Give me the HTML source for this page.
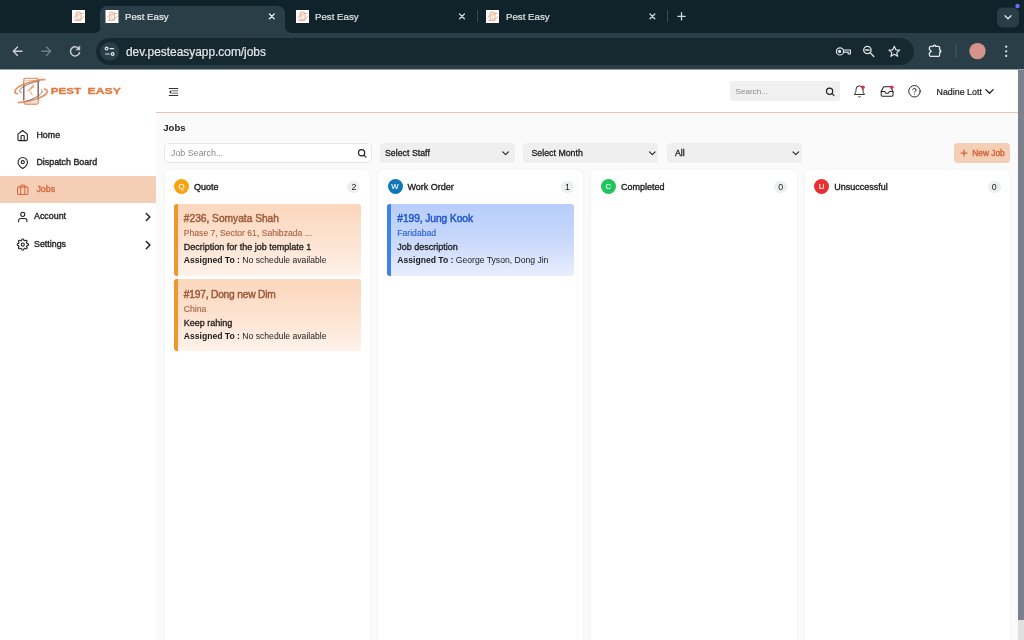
<!DOCTYPE html>
<html lang="en">
<head>
<meta charset="utf-8">
<title>Pest Easy</title>
<style>
*{box-sizing:border-box;margin:0;padding:0}
html,body{width:1024px;height:640px;overflow:hidden;background:#fafafa;font-family:"Liberation Sans",sans-serif;color:#1f1f1f}
.abs{position:absolute}
#tabstrip{position:absolute;left:0;top:0;width:1024px;height:33px;background:#10222a}
#toolbar{position:absolute;left:0;top:32.5px;width:1024px;height:37.5px;background:#2a3e47}
#topline{position:absolute;left:0;top:69px;width:1024px;height:1px;background:#9aa5ab}
.tt{position:absolute;top:9.500px;font-size:9.700px;line-height:14px;color:#dbe2e5;white-space:nowrap;-webkit-text-stroke:.2px currentColor}
#activetab{position:absolute;left:100px;top:5.5px;width:185px;height:28px;background:#2a3e47;border-radius:7px 7px 0 0}
#urlbar{position:absolute;left:96px;top:37.5px;width:818px;height:27.5px;border-radius:14px;background:#162830}
#urltxt{position:absolute;left:126px;top:37.500px;line-height:28px;font-size:11.900px;color:#e4e9eb;white-space:nowrap;-webkit-text-stroke:.2px #e4e9eb}
#sidebar{position:absolute;left:0;top:70px;width:155.500px;height:570px;background:#fff}
#header{position:absolute;left:156px;top:70px;width:862px;height:43px;background:#fff;border-bottom:1px solid #e6c3b5}
#scroll{position:absolute;left:1018px;top:70px;width:6px;height:570px;background:#e0e0e0}
#scroll div{width:6px;height:550px;background:#7c808b}
.nav{position:absolute;left:0;width:156px;height:27px;font-size:8.9px;line-height:27px;color:#222;-webkit-text-stroke:.35px #222}
.nav span{position:absolute;top:.45px;white-space:nowrap;margin-left:.4px}
.nav.act{background:#f5cfb5;color:#d6663c;-webkit-text-stroke:.35px #d6663c}
.col{position:absolute;top:169.500px;width:205.400px;height:480px;background:#fff;border-radius:5px;box-shadow:0 0 2px rgba(0,0,0,.08)}
.col .ttl{position:absolute;left:29.500px;top:11.300px;font-size:9px;line-height:12px;color:#1c1c1c;white-space:nowrap;-webkit-text-stroke:.35px #1c1c1c}
.col .dot{position:absolute;left:9.500px;top:9.400px;width:15px;height:15px;border-radius:8px;color:rgba(255,255,255,.92);font-size:7.800px;line-height:15.400px;text-align:center;font-weight:normal;-webkit-text-stroke:.2px rgba(255,255,255,.9)}
.col .cnt{position:absolute;right:9.500px;top:11.600px;width:13px;height:12px;border-radius:6px;background:#eceef0;color:#222;font-size:8.8px;line-height:12.5px;text-align:center}
.card{position:absolute;left:9.300px;width:187px;height:72px;border-radius:3px;overflow:hidden}
.card i{position:absolute;left:0;top:0;width:4px;height:100%}
.card div{position:absolute;left:10px;white-space:nowrap}
.card .h{top:9.500px;font-size:10.200px;line-height:12px;font-weight:normal;-webkit-text-stroke:.45px currentColor}
.card .a{top:24.500px;font-size:8.600px;line-height:10px;-webkit-text-stroke:.15px currentColor}
.card .d{top:38.600px;font-size:9px;line-height:10px;color:#1c1c1c;-webkit-text-stroke:.3px #1c1c1c}
.card .s{top:51.5px;font-size:8.6px;line-height:10px;color:#1c1c1c}
.card .s b{font-weight:bold}
.q{background:linear-gradient(180deg,#fcd6bd 0%,#fde4d2 55%,#fef2ea 100%)}
.q i{background:#ef962c}
.q .h{color:#9d5a3b}
.q .a{color:#ad6648}
.w{background:linear-gradient(180deg,#b7cdfb 0%,#cbdafc 55%,#e9eefe 100%)}
.w i{background:#3f83ea}
.w .h{color:#2158cc}
.w .a{color:#2c63d4}
.sel{position:absolute;top:143px;width:135px;height:20px;background:#efefef;border-radius:4px;font-size:8.800px;line-height:21.300px;color:#1c1c1c;-webkit-text-stroke:.3px #1c1c1c}
.sel span{position:absolute;top:0;white-space:nowrap}
#icons{position:absolute;left:0;top:0;width:1024px;height:640px;pointer-events:none}
</style>
</head>
<body><div id="root" style="position:absolute;left:0;top:0;width:1024px;height:640px;will-change:transform">
<div id="tabstrip"></div>
<div id="activetab"></div>
<div id="toolbar"></div>
<div id="topline"></div>
<div id="urlbar"></div>
<div id="urltxt">dev.pesteasyapp.com/jobs</div>
<span class="tt" style="left:125px;color:#e3e9eb">Pest Easy</span>
<span class="tt" style="left:315px">Pest Easy</span>
<span class="tt" style="left:506px">Pest Easy</span>

<div id="sidebar">
  <div class="nav" style="top:52px"><span style="left:36px">Home</span></div>
  <div class="nav" style="top:79px"><span style="left:36px">Dispatch Board</span></div>
  <div class="nav act" style="top:106px"><span style="left:36px">Jobs</span></div>
  <div class="nav" style="top:133px"><span style="left:33.600px">Account</span></div>
  <div class="nav" style="top:161px"><span style="left:33.600px">Settings</span></div>
</div>
<div id="header">
  <div class="abs" style="left:574px;top:11px;width:110px;height:20px;background:#f0f0f0;border-radius:3px"></div>
  <span class="abs" style="left:579.5px;top:12px;line-height:20px;font-size:8.1px;color:#8c8c8c;white-space:nowrap">Search...</span>
  <span class="abs" style="left:780.500px;top:11.600px;line-height:20px;font-size:8.900px;color:#222;white-space:nowrap;-webkit-text-stroke:.2px #222">Nadine Lott</span>
</div>
<div id="scroll"><div></div></div>

<div class="abs" style="left:163.200px;top:122.100px;font-size:9.600px;line-height:12px;font-weight:bold;color:#262626">Jobs</div>

<div class="abs" style="left:163.5px;top:143px;width:208px;height:20px;background:#fff;border:1px solid #e7e7e7;border-radius:4px">
  <span class="abs" style="left:6.5px;top:0;line-height:19px;font-size:8.900px;color:#8a8a8a;white-space:nowrap">Job Search...</span>
</div>
<div class="sel" style="left:379.5px"><span style="left:5.5px">Select Staff</span></div>
<div class="sel" style="left:523px"><span style="left:8.5px">Select Month</span></div>
<div class="sel" style="left:666.5px"><span style="left:8.5px">All</span></div>
<div class="abs" style="left:954.200px;top:143.300px;width:56.300px;height:19.800px;background:#f5cfb5;border-radius:4px;color:#d2643a;font-size:8.400px;line-height:20px;white-space:nowrap;-webkit-text-stroke:.4px #d2643a"><span class="abs" style="left:18px">New Job</span></div>

<div class="col" style="left:164.5px">
  <div class="dot" style="background:#f8a411">Q</div><div class="ttl">Quote</div><div class="cnt">2</div>
  <div class="card q" style="top:34px"><i></i>
    <div class="h">#236, Somyata Shah</div>
    <div class="a">Phase 7, Sector 61, Sahibzada ...</div>
    <div class="d">Decription for the job template 1</div>
    <div class="s"><b>Assigned To :</b> No schedule available</div>
  </div>
  <div class="card q" style="top:109.500px"><i></i>
    <div class="h" style="letter-spacing:-.19px">#197, Dong new Dim</div>
    <div class="a">China</div>
    <div class="d">Keep rahing</div>
    <div class="s"><b>Assigned To :</b> No schedule available</div>
  </div>
</div>
<div class="col" style="left:378px">
  <div class="dot" style="background:#0f78b8">W</div><div class="ttl">Work Order</div><div class="cnt">1</div>
  <div class="card w" style="top:34px"><i></i>
    <div class="h" style="letter-spacing:-.05px">#199, Jung Kook</div>
    <div class="a">Faridabad</div>
    <div class="d">Job description</div>
    <div class="s"><b>Assigned To :</b> George Tyson, Dong Jin</div>
  </div>
</div>
<div class="col" style="left:591.400px">
  <div class="dot" style="background:#1fc55c">C</div><div class="ttl">Completed</div><div class="cnt">0</div>
</div>
<div class="col" style="left:804.700px">
  <div class="dot" style="background:#ea2f2f">U</div><div class="ttl">Unsuccessful</div><div class="cnt">0</div>
</div>

<svg id="icons" viewBox="0 0 1024 640" fill="none" stroke-linecap="round" stroke-linejoin="round">
<!-- chrome: tab favicons -->
<g transform="translate(72 10)">
  <rect x="0" y="0" width="13" height="13" fill="#fff" stroke="none"/>
  <rect x="4.200" y="2.300" width="4.800" height="8.400" rx=".6" stroke="#e9a98a" stroke-width=".9"/>
  <path d="M11.300 3.400C8 3.300 2.200 5.600 1.900 7.300M11.500 6.300c1 1-3 3.800-8.800 4.200" stroke="#eda583" stroke-width=".9"/>
  <path d="M7.300 4.500l-1.600 2.200 1.200 2" stroke="#f3c3ab" stroke-width=".8"/>
</g>
<g transform="translate(105.5 10)">
  <rect x="0" y="0" width="13" height="13" fill="#fff" stroke="none"/>
  <rect x="4.200" y="2.300" width="4.800" height="8.400" rx=".6" stroke="#e9a98a" stroke-width=".9"/>
  <path d="M11.300 3.400C8 3.300 2.200 5.600 1.900 7.300M11.500 6.300c1 1-3 3.800-8.800 4.200" stroke="#eda583" stroke-width=".9"/>
  <path d="M7.300 4.500l-1.600 2.200 1.200 2" stroke="#f3c3ab" stroke-width=".8"/>
</g>
<g transform="translate(296 10)">
  <rect x="0" y="0" width="13" height="13" fill="#fff" stroke="none"/>
  <rect x="4.200" y="2.300" width="4.800" height="8.400" rx=".6" stroke="#e9a98a" stroke-width=".9"/>
  <path d="M11.300 3.400C8 3.300 2.200 5.600 1.900 7.300M11.500 6.300c1 1-3 3.800-8.800 4.200" stroke="#eda583" stroke-width=".9"/>
  <path d="M7.300 4.500l-1.600 2.200 1.200 2" stroke="#f3c3ab" stroke-width=".8"/>
</g>
<g transform="translate(486 10)">
  <rect x="0" y="0" width="13" height="13" fill="#fff" stroke="none"/>
  <rect x="4.200" y="2.300" width="4.800" height="8.400" rx=".6" stroke="#e9a98a" stroke-width=".9"/>
  <path d="M11.300 3.400C8 3.300 2.200 5.600 1.900 7.300M11.500 6.300c1 1-3 3.800-8.800 4.200" stroke="#eda583" stroke-width=".9"/>
  <path d="M7.300 4.500l-1.600 2.200 1.200 2" stroke="#f3c3ab" stroke-width=".8"/>
</g>
<!-- tab close x -->
<g stroke="#e3e9eb" stroke-width="1.3">
  <path d="M269.400 14l4.800 4.800m0-4.800l-4.800 4.800"/>
</g>
<g stroke="#cfd7da" stroke-width="1.3">
  <path d="M459.600 14l4.800 4.800m0-4.800l-4.800 4.800"/>
  <path d="M650 14l4.800 4.800m0-4.800l-4.800 4.800"/>
  <path d="M681.5 12.6v7.4m-3.700-3.700h7.400"/>
</g>
<path d="M477.5 10.5v11M667.5 10.5v11" stroke="#3a4b53" stroke-width="1"/>
<!-- tab search dropdown -->
<rect x="997" y="7.5" width="22" height="20" rx="6" fill="#2a3e47" stroke="none"/>
<path d="M1005 15.8l3 3 3-3" stroke="#dfe6e8" stroke-width="1.3"/>
<circle cx="1017.5" cy="6" r="2.2" fill="#6b6cf5" stroke="none"/>
<!-- active tab feet -->
<path d="M93 33h8v-7a7 7 0 0 1-7 7z M285 26v7h7a7 7 0 0 1-7-7z" fill="#2a3e47" stroke="none"/>
<!-- nav arrows -->
<path d="M22 51.2H13.6m3.9-4.2l-4.2 4.2 4.2 4.2" stroke="#c9d2d6" stroke-width="1.4"/>
<path d="M42 51.2h8.4m-3.9-4.2l4.2 4.2-4.2 4.2" stroke="#6f7f87" stroke-width="1.4"/>
<path d="M79.3 49.5a4.6 4.6 0 1 0 .2 3.2" stroke="#c9d2d6" stroke-width="1.4"/>
<path d="M79.8 46.2v3.6h-3.6z" fill="#c9d2d6" stroke="#c9d2d6" stroke-width=".6"/>
<!-- site info -->
<circle cx="109.700" cy="51.300" r="9.400" fill="#2a3e47" stroke="none"/>
<g stroke="#dfe6e8" stroke-width="1.2">
  <circle cx="106.6" cy="48.6" r="1.4"/><path d="M110 48.6h3.6"/>
  <circle cx="112.6" cy="54" r="1.4"/><path d="M105.6 54h3.6"/>
</g>
<!-- key -->
<g stroke="#dfe6e8" stroke-width="1.2">
  <circle cx="840" cy="51.4" r="3.6"/>
  <circle cx="839.6" cy="51.4" r="1" fill="#dfe6e8"/>
  <path d="M843.6 50h6.8v4h-2.2v-1.8h-4"/>
</g>
<!-- zoom out -->
<g stroke="#dfe6e8" stroke-width="1.3">
  <circle cx="867.4" cy="50" r="3.7"/><path d="M870.2 52.8l3.6 3.7M865.6 50h3.6"/>
</g>
<!-- star -->
<path d="M894.3 46.3l1.55 3.5 3.8.35-2.9 2.5.9 3.7-3.35-2-3.35 2 .9-3.7-2.9-2.5 3.8-.35z" stroke="#dfe6e8" stroke-width="1.2"/>
<!-- extension puzzle -->
<path d="M929.400 47.600a1.200 1.200 0 0 1 1.200-1.200h2.600a1.300 1.300 0 0 1 2.600 0h2.600a1.200 1.200 0 0 1 1.200 1.200v2.400a1.300 1.300 0 0 1 0 2.600v2.500a1.200 1.200 0 0 1-1.200 1.200h-7.800a1.200 1.200 0 0 1-1.200-1.200v-2.100l1.900-1.700-1.900-1.700z" stroke="#dfe6e8" stroke-width="1.300"/><path d="M933.300 46.300a1.200 1.200 0 0 1 2.400 0zM939.700 50.100a1.200 1.200 0 0 1 0 2.400z" fill="#dfe6e8" stroke="none"/>
<path d="M956 45v12.5" stroke="#4a5b63" stroke-width="1"/>
<circle cx="977.5" cy="51.1" r="8.2" fill="#d4948b" stroke="none"/>
<g fill="#dfe6e8" stroke="none"><circle cx="1006.2" cy="46.7" r="1.15"/><circle cx="1006.2" cy="51.3" r="1.15"/><circle cx="1006.2" cy="55.9" r="1.15"/></g>

<!-- logo -->
<g stroke-width="1">
  <rect x="23.8" y="78.300" width="14.400" height="25.800" rx="1.600" stroke="#e8824f" stroke-width="1.100"/>
  <path d="M23.800 83v16.500M38.200 82v17.500" stroke="#6e625f" stroke-width="1.100"/>
  <path d="M24.500 80.600h13M24.500 102h13" stroke="#f0a882" stroke-width=".7"/>
  <path d="M44.800 79.600C35 79.200 15.800 86 14.900 91.300c-.3 1.600 1 2.400 2.600 2.300" stroke="#ec905f" stroke-width="1.700"/>
  <path d="M39.500 81C32 82 20.500 87 19.700 90.500c-.2 1 .5 1.700 1.600 2" stroke="#7a6c68" stroke-width=".9"/>
  <path d="M44.500 89.200c3.300.8 3.600 2.500 1.700 4.400C42 98 30 102 18.500 102.600" stroke="#ec905f" stroke-width="1.700"/>
  <path d="M41.300 89.800c1.400 1 1.200 2.200.2 3.300C38.500 96.500 31 100 25 101.500" stroke="#7a6c68" stroke-width=".9"/>
  <path d="M33.800 84.500l-4.300 5.800 2.800 4.800M27.500 90.800l6.500-4M31 87.500l2.500-1.800" stroke="#ee9a6b" stroke-width="1"/>
</g>
<text font-family="Liberation Sans, sans-serif" font-weight="bold" font-size="9.300" fill="#e4763f" stroke="#e4763f" stroke-width=".3"><tspan x="50.800" y="94.200" textLength="30.400" lengthAdjust="spacingAndGlyphs">PEST</tspan><tspan x="87.500" y="94.200" textLength="33.500" lengthAdjust="spacingAndGlyphs">EASY</tspan></text>

<!-- sidebar icons (feather 24 grid) -->
<svg x="16.4" y="129.2" width="12.5" height="12.5" viewBox="0 0 24 24" stroke="#222" stroke-width="2.1"><path d="M3 9.5l9-7 9 7V20a2 2 0 0 1-2 2H5a2 2 0 0 1-2-2z"/><path d="M9 22v-8.500a1.500 1.500 0 0 1 1.500-1.500h3a1.500 1.500 0 0 1 1.500 1.500V22"/></svg>
<svg x="16.5" y="156.700" width="12.5" height="12.5" viewBox="0 0 24 24" stroke="#222" stroke-width="2.1"><path d="M21 10.500c0 6.500-9 12-9 12s-9-5.500-9-12a9 9 0 0 1 18 0z"/><circle cx="12" cy="10.500" r="3"/></svg>
<svg x="16.500" y="183.500" width="12.500" height="12.500" viewBox="0 0 24 24" stroke="#d6663c" stroke-width="2"><rect x="2" y="6.500" width="20" height="14.500" rx="2.500"/><path d="M16 21V5a2 2 0 0 0-2-2h-4a2 2 0 0 0-2 2v16"/></svg>
<svg x="16.500" y="210.700" width="12.500" height="12.500" viewBox="0 0 24 24" stroke="#222" stroke-width="2.100"><path d="M20 21v-2a4 4 0 0 0-4-4H8a4 4 0 0 0-4 4v2"/><circle cx="12" cy="7" r="4"/></svg>
<svg x="16.500" y="238.300" width="12.500" height="12.500" viewBox="0 0 24 24" stroke="#222" stroke-width="2.100"><circle cx="12" cy="12" r="3"/><path d="M19.400 15a1.650 1.650 0 0 0 .33 1.820l.06.06a2 2 0 0 1 0 2.830 2 2 0 0 1-2.830 0l-.06-.06a1.650 1.650 0 0 0-1.820-.33 1.650 1.650 0 0 0-1 1.510V21a2 2 0 0 1-2 2 2 2 0 0 1-2-2v-.09A1.650 1.650 0 0 0 9 19.400a1.650 1.650 0 0 0-1.820.33l-.06.06a2 2 0 0 1-2.830 0 2 2 0 0 1 0-2.830l.06-.06a1.650 1.650 0 0 0 .33-1.820 1.650 1.650 0 0 0-1.510-1H3a2 2 0 0 1-2-2 2 2 0 0 1 2-2h.09A1.650 1.650 0 0 0 4.600 9a1.650 1.650 0 0 0-.33-1.820l-.06-.06a2 2 0 0 1 0-2.830 2 2 0 0 1 2.830 0l.06.06a1.650 1.650 0 0 0 1.820.33H9a1.650 1.650 0 0 0 1-1.510V3a2 2 0 0 1 2-2 2 2 0 0 1 2 2v.09a1.650 1.650 0 0 0 1 1.510 1.650 1.650 0 0 0 1.820-.33l.06-.06a2 2 0 0 1 2.830 0 2 2 0 0 1 0 2.830l-.06.06a1.650 1.650 0 0 0-.33 1.820V9a1.650 1.650 0 0 0 1.510 1H21a2 2 0 0 1 2 2 2 2 0 0 1-2 2h-.09a1.650 1.650 0 0 0-1.510 1z"/></svg>
<path d="M146.300 213.400l3.600 3.600-3.600 3.600M146.300 241.500l3.600 3.600-3.600 3.600" stroke="#1c1c1c" stroke-width="1.400"/>

<!-- header: menu fold -->
<g stroke="#333" stroke-width="1"><path d="M169.200 88.500h8.600M169.200 95.500h8.600"/><path d="M172.500 90.800h5.300M172.500 93.200h5.300" stroke-width=".75"/><path d="M171 90.600l-1.700 1.400 1.700 1.400z" fill="#333" stroke-width=".4"/></g>
<!-- header search -->
<g stroke="#222" stroke-width="1.200"><circle cx="829.600" cy="91.300" r="3.100"/><path d="M832 93.700l2 2"/></g>
<!-- bell -->
<svg x="852.600" y="84.700" width="13.750" height="13.750" viewBox="0 0 24 24" stroke="#222" stroke-width="1.700"><path d="M18 8A6 6 0 0 0 6 8c0 7-3 9-3 9h18s-3-2-3-9"/><path d="M13.730 21a2 2 0 0 1-3.460 0"/></svg>
<circle cx="863" cy="87.200" r="1.800" fill="#e0313a" stroke="none"/>
<!-- inbox -->
<svg x="880" y="84.400" width="14.200" height="14.200" viewBox="0 0 24 24" stroke="#222" stroke-width="1.700"><path d="M22 12h-6l-2 3h-4l-2-3H2"/><path d="M5.450 5.110L2 12v6a2 2 0 0 0 2 2h16a2 2 0 0 0 2-2v-6l-3.450-6.890A2 2 0 0 0 16.760 4H7.240a2 2 0 0 0-1.790 1.110z"/></svg>
<circle cx="891.800" cy="87.200" r="1.800" fill="#e0313a" stroke="none"/>
<!-- help -->
<svg x="907.600" y="84.400" width="13.750" height="13.750" viewBox="0 0 24 24" stroke="#222" stroke-width="1.700"><circle cx="12" cy="12" r="10"/><path d="M9.090 9a3 3 0 0 1 5.830 1c0 2-3 3-3 3"/><path d="M12 17h.01"/></svg>
<path d="M985.800 89.600l3.700 3.700 3.700-3.700" stroke="#222" stroke-width="1.300"/>

<!-- job search icon -->
<g stroke="#222" stroke-width="1.200"><circle cx="361.600" cy="152.800" r="3.100"/><path d="M364 155.200l2 2"/></g>
<!-- select chevrons -->
<path d="M502.800 151.900l2.800 2.800 2.800-2.800M649.500 151.900l2.800 2.800 2.800-2.800M793 151.900l2.800 2.800 2.800-2.800" stroke="#222" stroke-width="1.100"/>
<!-- plus -->
<path d="M964.100 150.100v5.800M961.200 153h5.800" stroke="#d2643a" stroke-width="1.250"/>

</svg>
</div></body>
</html>
